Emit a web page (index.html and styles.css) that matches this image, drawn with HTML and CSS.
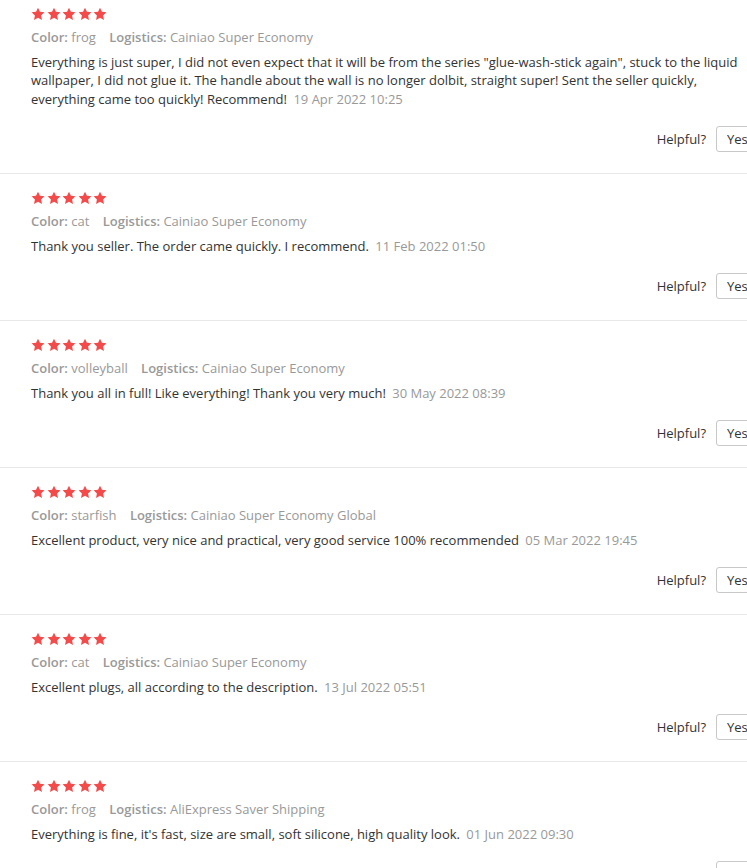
FILE: index.html
```html
<!DOCTYPE html>
<html lang="en">
<head>
    <meta charset="UTF-8">
    <meta name="viewport" content="width=device-width, initial-scale=1.0">
    <title>Feedback</title>
    <link rel="stylesheet" href="styles.css">
</head>
<body>
    <svg width="0" height="0" style="position:absolute">
        <defs>
            <symbol id="star" viewBox="0 0 24 24">
                <path d="M12 1.2l3.3 7.1 7.7.9-5.7 5.3 1.5 7.7L12 18.3l-6.8 3.9 1.5-7.7L1 9.2l7.7-.9z"/>
            </symbol>
        </defs>
    </svg>

    <div class="reviews">
        <div class="review">
            <div class="stars">
                <svg><use href="#star"/></svg><svg><use href="#star"/></svg><svg><use href="#star"/></svg><svg><use href="#star"/></svg><svg><use href="#star"/></svg>
            </div>
            <div class="meta">
                <span><b>Color:</b> frog</span>
                <span><b>Logistics:</b> Cainiao Super Economy</span>
            </div>
            <div class="text">Everything is just super, I did not even expect that it will be from the series "glue-wash-stick again", stuck to the liquid wallpaper, I did not glue it. The handle about the wall is no longer dolbit, straight super! Sent the seller quickly, everything came too quickly! Recommend! <span class="date">19 Apr 2022 10:25</span></div>
            <div class="helpful">Helpful? <button class="btn">Yes</button></div>
        </div>

        <div class="review">
            <div class="stars">
                <svg><use href="#star"/></svg><svg><use href="#star"/></svg><svg><use href="#star"/></svg><svg><use href="#star"/></svg><svg><use href="#star"/></svg>
            </div>
            <div class="meta">
                <span><b>Color:</b> cat</span>
                <span><b>Logistics:</b> Cainiao Super Economy</span>
            </div>
            <div class="text">Thank you seller. The order came quickly. I recommend. <span class="date">11 Feb 2022 01:50</span></div>
            <div class="helpful">Helpful? <button class="btn">Yes</button></div>
        </div>

        <div class="review">
            <div class="stars">
                <svg><use href="#star"/></svg><svg><use href="#star"/></svg><svg><use href="#star"/></svg><svg><use href="#star"/></svg><svg><use href="#star"/></svg>
            </div>
            <div class="meta">
                <span><b>Color:</b> volleyball</span>
                <span><b>Logistics:</b> Cainiao Super Economy</span>
            </div>
            <div class="text">Thank you all in full! Like everything! Thank you very much! <span class="date">30 May 2022 08:39</span></div>
            <div class="helpful">Helpful? <button class="btn">Yes</button></div>
        </div>

        <div class="review">
            <div class="stars">
                <svg><use href="#star"/></svg><svg><use href="#star"/></svg><svg><use href="#star"/></svg><svg><use href="#star"/></svg><svg><use href="#star"/></svg>
            </div>
            <div class="meta">
                <span><b>Color:</b> starfish</span>
                <span><b>Logistics:</b> Cainiao Super Economy Global</span>
            </div>
            <div class="text">Excellent product, very nice and practical, very good service 100% recommended <span class="date">05 Mar 2022 19:45</span></div>
            <div class="helpful">Helpful? <button class="btn">Yes</button></div>
        </div>

        <div class="review">
            <div class="stars">
                <svg><use href="#star"/></svg><svg><use href="#star"/></svg><svg><use href="#star"/></svg><svg><use href="#star"/></svg><svg><use href="#star"/></svg>
            </div>
            <div class="meta">
                <span><b>Color:</b> cat</span>
                <span><b>Logistics:</b> Cainiao Super Economy</span>
            </div>
            <div class="text">Excellent plugs, all according to the description. <span class="date">13 Jul 2022 05:51</span></div>
            <div class="helpful">Helpful? <button class="btn">Yes</button></div>
        </div>

        <div class="review">
            <div class="stars">
                <svg><use href="#star"/></svg><svg><use href="#star"/></svg><svg><use href="#star"/></svg><svg><use href="#star"/></svg><svg><use href="#star"/></svg>
            </div>
            <div class="meta">
                <span><b>Color:</b> frog</span>
                <span><b>Logistics:</b> AliExpress Saver Shipping</span>
            </div>
            <div class="text">Everything is fine, it's fast, size are small, soft silicone, high quality look. <span class="date">01 Jun 2022 09:30</span></div>
            <div class="helpful">Helpful? <button class="btn">Yes</button></div>
        </div>
    </div>
</body>
</html>
```

FILE: styles.css
```css
body {
    margin: 0;
    overflow: hidden;
    background: #fff;
    font-family: "Open Sans", Arial, sans-serif;
    font-size: 13px;
    line-height: 18.5px;
    color: #333;
}
.reviews {
    width: 780px;
    margin-top: -10px;
}
.review {
    padding: 17px 0 21px 31px;
    border-bottom: 1px solid #e8e8e8;
}
.stars {
    display: flex;
    gap: 1.5px;
    height: 14px;
    align-items: center;
}
.stars svg {
    width: 14px;
    height: 14px;
    fill: #f44a4a;
}
.meta {
    margin-top: 7px;
    color: #999;
}
.meta span {
    margin-right: 10px;
}
.meta b {
    font-weight: 600;
}
.text {
    margin-top: 6px;
    max-width: 712px;
}
.date {
    margin-left: 3px;
    color: #999;
}
.helpful {
    display: flex;
    justify-content: flex-end;
    align-items: center;
    gap: 10px;
    margin-top: 18px;
}
.btn {
    height: 26px;
    width: 64px;
    padding: 0 10px;
    text-align: left;
    background: #fff;
    border: 1px solid #c8c8c8;
    border-radius: 3px;
    font-family: inherit;
    font-size: 13px;
    color: #333;
}
```
